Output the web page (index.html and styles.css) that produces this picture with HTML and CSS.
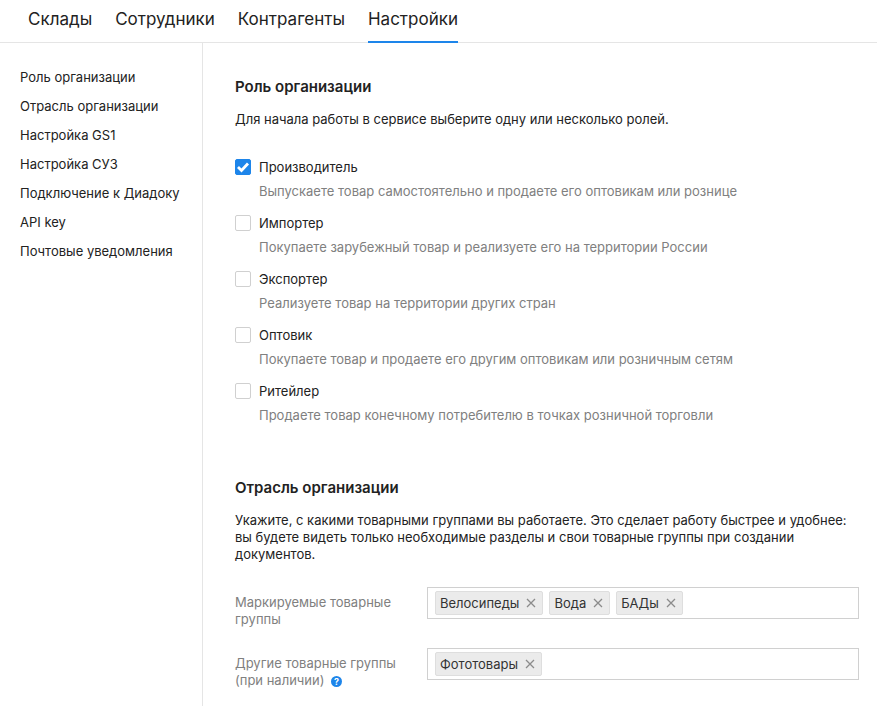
FILE: index.html
```html
<!DOCTYPE html>
<html lang="ru">
<head>
    <meta charset="UTF-8">
    <meta name="viewport" content="width=device-width, initial-scale=1.0">
    <title>Настройки</title>
    <link rel="stylesheet" href="styles.css">
</head>
<body>
    <header>
        <nav class="tabs">
            <a href="#">Склады</a>
            <a href="#">Сотрудники</a>
            <a href="#">Контрагенты</a>
            <a href="#" class="active">Настройки</a>
        </nav>
    </header>

    <div class="page">
        <nav class="sidebar">
            <a href="#role">Роль организации</a>
            <a href="#industry">Отрасль организации</a>
            <a href="#">Настройка GS1</a>
            <a href="#">Настройка СУЗ</a>
            <a href="#">Подключение к Диадоку</a>
            <a href="#">API key</a>
            <a href="#">Почтовые уведомления</a>
        </nav>

        <main>
            <section id="role">
                <h2>Роль организации</h2>
                <p>Для начала работы в сервисе выберите одну или несколько ролей.</p>

                <div class="roles">
                    <label class="role">
                        <input type="checkbox" checked>
                        <span>Производитель</span>
                        <span class="hint">Выпускаете товар самостоятельно и продаете его оптовикам или рознице</span>
                    </label>
                    <label class="role">
                        <input type="checkbox">
                        <span>Импортер</span>
                        <span class="hint">Покупаете зарубежный товар и реализуете его на территории России</span>
                    </label>
                    <label class="role">
                        <input type="checkbox">
                        <span>Экспортер</span>
                        <span class="hint">Реализуете товар на территории других стран</span>
                    </label>
                    <label class="role">
                        <input type="checkbox">
                        <span>Оптовик</span>
                        <span class="hint">Покупаете товар и продаете его другим оптовикам или розничным сетям</span>
                    </label>
                    <label class="role">
                        <input type="checkbox">
                        <span>Ритейлер</span>
                        <span class="hint">Продаете товар конечному потребителю в точках розничной торговли</span>
                    </label>
                </div>
            </section>

            <section id="industry">
                <h2>Отрасль организации</h2>
                <p>Укажите, с какими товарными группами вы работаете. Это сделает работу быстрее и удобнее:<br>
                вы будете видеть только необходимые разделы и свои товарные группы при создании<br>
                документов.</p>

                <div class="fields">
                    <div class="field">
                        <label for="marked">Маркируемые товарные<br>группы</label>
                        <div class="tokens">
                            <span class="token">Велосипеды
                                <button type="button" aria-label="Удалить"><svg width="10" height="10" viewBox="0 0 10 10"><path d="M1 1l8 8M9 1l-8 8"/></svg></button>
                            </span>
                            <span class="token">Вода
                                <button type="button" aria-label="Удалить"><svg width="10" height="10" viewBox="0 0 10 10"><path d="M1 1l8 8M9 1l-8 8"/></svg></button>
                            </span>
                            <span class="token">БАДы
                                <button type="button" aria-label="Удалить"><svg width="10" height="10" viewBox="0 0 10 10"><path d="M1 1l8 8M9 1l-8 8"/></svg></button>
                            </span>
                            <input type="text" id="marked">
                        </div>
                    </div>

                    <div class="field">
                        <label for="other">Другие товарные группы<br>(при наличии) <span class="help">?</span></label>
                        <div class="tokens">
                            <span class="token">Фототовары
                                <button type="button" aria-label="Удалить"><svg width="10" height="10" viewBox="0 0 10 10"><path d="M1 1l8 8M9 1l-8 8"/></svg></button>
                            </span>
                            <input type="text" id="other">
                        </div>
                    </div>
                </div>
            </section>
        </main>
    </div>
</body>
</html>
```
FILE: styles.css
```css
* {
    box-sizing: border-box;
}
body {
    font-family: Inter, Roboto, sans-serif;
    font-size: 13px;
    line-height: 17px;
    margin: 0;
    background-color: #fff;
    color: #222;
}
a {
    color: #222;
    text-decoration: none;
}
header {
    border-bottom: 1px solid #e5e5e5;
}
.tabs {
    display: flex;
    gap: 23px;
    padding-left: 28px;
    font-size: 17px;
    line-height: 24px;
}
.tabs a {
    padding: 7px 0 11px;
}
.tabs .active {
    padding-bottom: 10px;
    margin-bottom: -1px;
    border-bottom: 2px solid #1d85ea;
}
.page {
    display: flex;
    min-height: calc(100vh - 43px);
}
.sidebar {
    display: flex;
    flex-direction: column;
    flex-shrink: 0;
    gap: 12px;
    width: 203px;
    padding: 26px 0 0 20px;
    border-right: 1px solid #e5e5e5;
}
main {
    flex: 1;
    min-width: 0;
    padding: 34px 18px 0 32px;
}
h2 {
    margin: 0 0 14px;
    font-size: 15px;
    line-height: 20px;
    font-weight: 600;
}
p {
    margin: 0;
}
.roles {
    display: flex;
    flex-direction: column;
    gap: 8px;
    margin: 27px 0 51px;
}
.role {
    display: grid;
    grid-template-columns: 16px 1fr;
    column-gap: 8px;
    line-height: 24px;
}
.role input {
    appearance: none;
    width: 16px;
    height: 16px;
    margin: 4px 0;
    border: 1px solid #d0d0d0;
    border-radius: 2px;
}
.role input:checked {
    border-color: #1d85ea;
    background: #1d85ea url("data:image/svg+xml,%3Csvg xmlns='http://www.w3.org/2000/svg' viewBox='0 0 14 14'%3E%3Cpath d='M2 7l3.5 3.5L12 3.5' fill='none' stroke='white' stroke-width='2.8'/%3E%3C/svg%3E") center / 14px no-repeat;
}
.hint {
    grid-column: 2;
    color: #808080;
}
.fields {
    display: flex;
    flex-direction: column;
    gap: 20px;
    margin-top: 24px;
}
.field {
    display: grid;
    grid-template-columns: 168px minmax(0, 1fr);
    column-gap: 24px;
}
.field label {
    padding-top: 7px;
    color: #808080;
}
.tokens {
    display: flex;
    gap: 6px;
    height: 32px;
    padding: 3px 7px;
    border: 1px solid #d0d0d0;
}
.tokens input {
    flex: 1;
    min-width: 0;
    padding: 0;
    border: 0;
    outline: 0;
    font: inherit;
}
.token {
    display: flex;
    align-items: center;
    gap: 7px;
    height: 24px;
    padding: 0 6px 0 4px;
    border: 1px solid #dedede;
    border-radius: 2px;
    background-color: #ebebeb;
    color: #333;
}
.token button {
    display: flex;
    padding: 0;
    border: 0;
    background: none;
}
.token svg {
    stroke: #8b8b8b;
    stroke-width: 1.3;
}
.help {
    display: inline-block;
    width: 11px;
    height: 11px;
    margin-left: 3px;
    border-radius: 50%;
    background-color: #1d85ea;
    color: #fff;
    font-size: 9px;
    line-height: 11px;
    font-weight: 700;
    text-align: center;
}
```
